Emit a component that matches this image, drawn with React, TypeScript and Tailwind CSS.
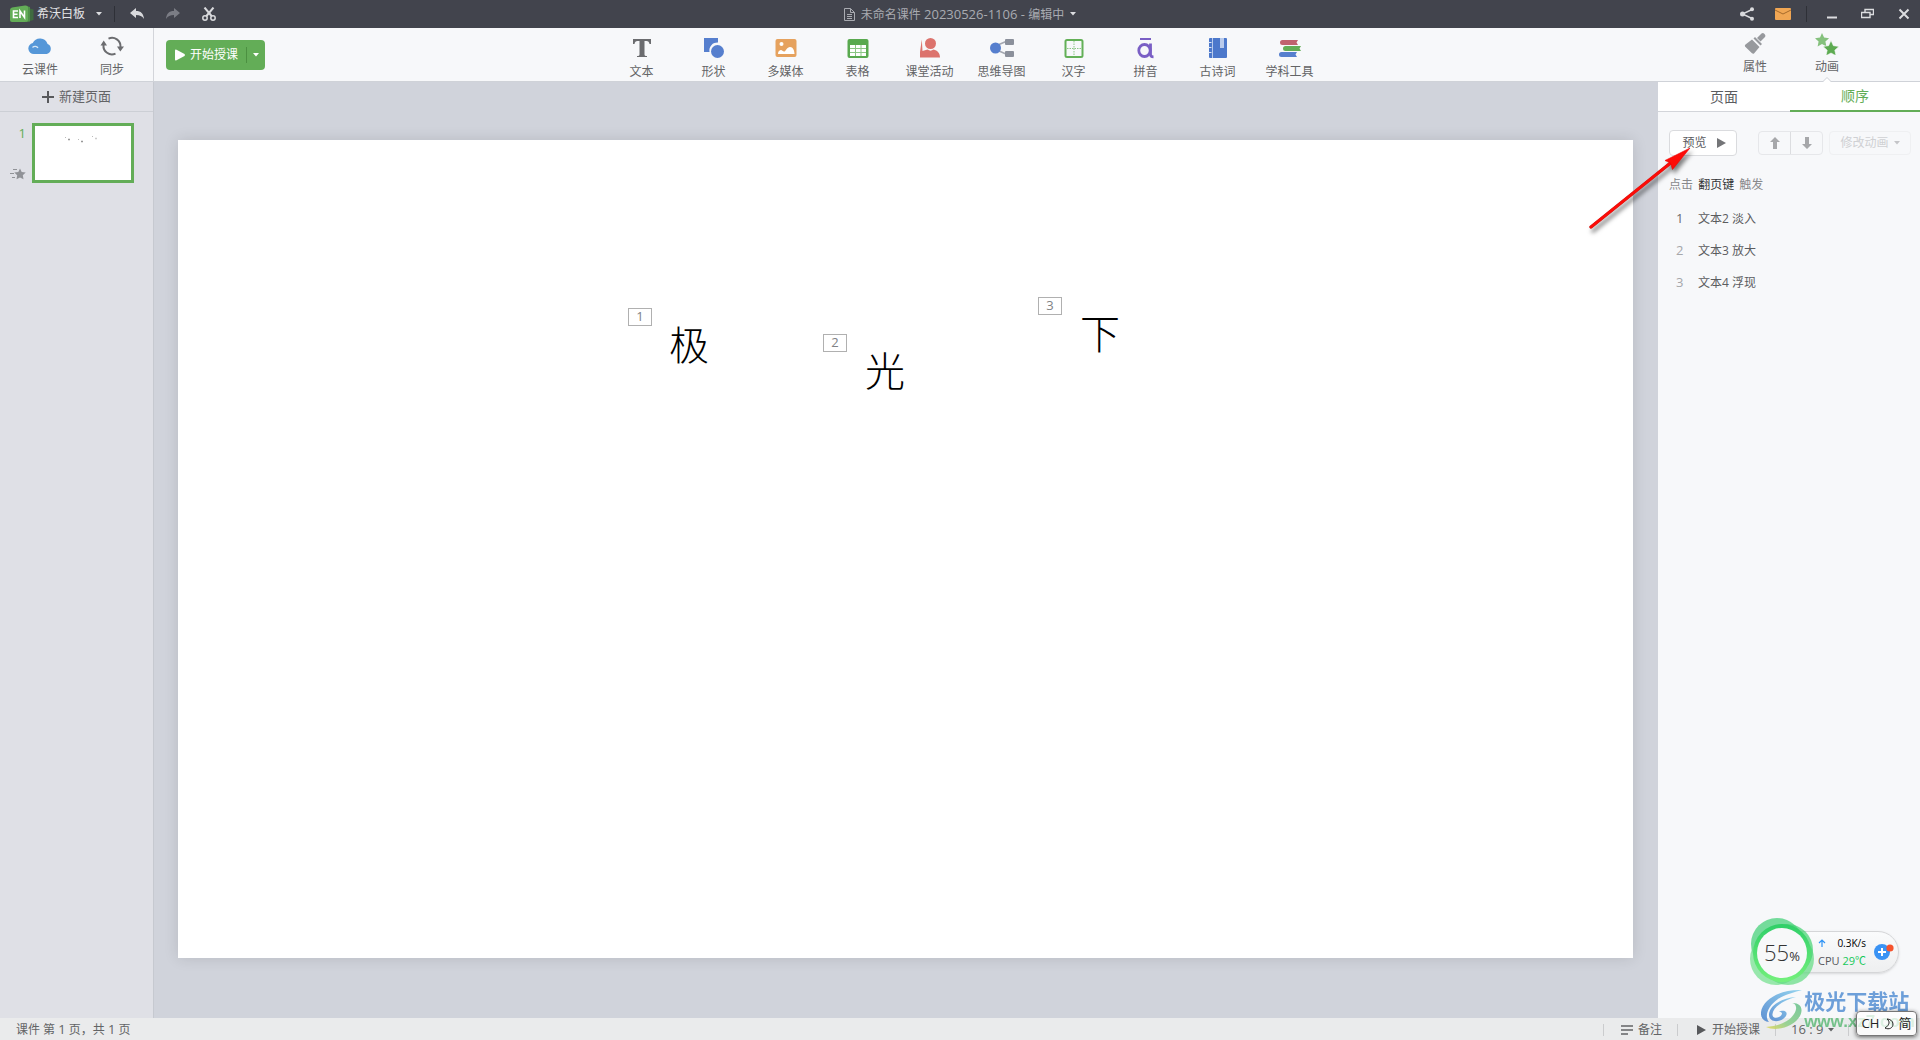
import React from "react";

type IconProps = { children: React.ReactNode; w?: number; h?: number };

function Icon({ children, w = 24, h = 24 }: IconProps) {
  return (
    <svg width={w} height={h} viewBox={`0 0 ${w} ${h}`} fill="none" aria-hidden="true" className="shrink-0">
      {children}
    </svg>
  );
}

function Caret({ color = "#dcdde0" }: { color?: string }) {
  return (
    <Icon w={6} h={4}>
      <path d="M0 0h6L3 3.5z" fill={color} />
    </Icon>
  );
}

function CloudIcon() {
  return (
    <Icon>
      <path d="M6 20a5.500 5.500 0 0 1-1.200-10.900A8 8 0 0 1 19.600 10 5.300 5.300 0 0 1 18.800 20z" fill="#5597d8" />
      <path d="M4.500 13.500c1.500-1.700 4.500-1.600 5.500.6" stroke="#d5e6f6" strokeWidth="1.200" />
    </Icon>
  );
}

function SyncIcon() {
  return (
    <Icon>
      <path d="M8.500 4.600A8.500 8.500 0 0 1 20.500 13" stroke="#6c6d70" strokeWidth="2" />
      <path d="M15.500 19.600A8.500 8.500 0 0 1 3.500 11" stroke="#6c6d70" strokeWidth="2" />
      <path d="M17 12.500h7L20.300 17.500zM0.500 11.500h6.500L3.700 6.500z" fill="#6c6d70" />
    </Icon>
  );
}

const tools: { label: string; icon: React.ReactNode }[] = [
  {
    label: "文本",
    icon: (
      <Icon>
        <path d="M3 3h18v5h-1.500c-.3-2-1.200-3-3-3H14.500v13.500c0 1 .8 1.500 2.500 1.500V21H7v-1c1.700 0 2.500-.5 2.500-1.500V5h-2c-1.800 0-2.700 1-3 3H3z" fill="#6b6c6f" />
      </Icon>
    ),
  },
  {
    label: "形状",
    icon: (
      <Icon>
        <path d="M2 2h14v4.500A8 8 0 0 0 7.500 16H2z" fill="#567fce" />
        <circle cx="15.500" cy="15.500" r="6.500" fill="#567fce" />
      </Icon>
    ),
  },
  {
    label: "多媒体",
    icon: (
      <Icon>
        <rect x="1.500" y="3" width="21" height="18" rx="2" fill="#e6a25e" />
        <circle cx="7.500" cy="8" r="2" fill="#fff" />
        <path d="M4 18c0-3 1.800-4 3-4s2 2 3.500 1.500S13 11 16 11s4.500 3.500 4.500 7z" fill="#fff" />
      </Icon>
    ),
  },
  {
    label: "表格",
    icon: (
      <Icon>
        <rect x="1.500" y="3" width="21" height="19" rx="2" fill="#59a94f" />
        <path d="M4 9h16v11H4z" fill="#fff" />
        <path d="M4 12.500h16M4 16.500h16M9.500 9v11M15 9v11" stroke="#8bc684" />
      </Icon>
    ),
  },
  {
    label: "课堂活动",
    icon: (
      <Icon>
        <circle cx="12.500" cy="7.500" r="5.500" fill="#dc736d" />
        <path d="M3.800 3.500 4.500 15l5-1.500c2 1.500 4 1.500 6 0 4 1 6.500 3.500 6.500 8H2V16z" fill="#dc736d" />
      </Icon>
    ),
  },
  {
    label: "思维导图",
    icon: (
      <Icon>
        <path d="M9 8.500 16 5.500M9 15l7 3" stroke="#a3a7b0" strokeWidth="1.500" />
        <circle cx="5.500" cy="12" r="5.500" fill="#567fce" />
        <rect x="15" y="3" width="9" height="6" rx="1" fill="#8b909b" />
        <rect x="15" y="15" width="9" height="6" rx="1" fill="#8b909b" />
      </Icon>
    ),
  },
  {
    label: "汉字",
    icon: (
      <Icon>
        <rect x="3.500" y="4" width="17" height="17" rx="1.500" stroke="#63b057" strokeWidth="2" />
        <path d="M12 5v15M5 12.500h14" stroke="#8bc684" strokeDasharray="1.500 1" />
      </Icon>
    ),
  },
  {
    label: "拼音",
    icon: (
      <Icon>
        <path d="M6 3h11" stroke="#7a5fc5" strokeWidth="2" />
        <ellipse cx="10.500" cy="14.500" rx="5.700" ry="6" stroke="#7a5fc5" strokeWidth="2.800" />
        <path d="M16.500 7.500V18.500c0 1.500.8 2.300 3 2.300" stroke="#7a5fc5" strokeWidth="2.800" />
      </Icon>
    ),
  },
  {
    label: "古诗词",
    icon: (
      <Icon>
        <rect x="3" y="2" width="18" height="20" rx="1" fill="#4c78cb" />
        <path d="M6.500 2v20" stroke="#b9cbec" />
        <path d="M2.500 6.500h3M2.500 11.500h3M2.500 16.500h3" stroke="#dfe8f7" />
        <path d="M14 2h4v10h-4z" fill="#b9cbec" />
      </Icon>
    ),
  },
  {
    label: "学科工具",
    icon: (
      <Icon>
        <path d="M4.500 4H20l-1.500 2.500L20 9H4.500a2.500 2.500 0 0 1 0-5z" fill="#c0626f" />
        <path d="M7.500 10H23l-1.500 2.500L23 15H7.500a2.500 2.500 0 0 1 0-5z" fill="#63ad57" />
        <path d="M3.500 16H19l-1.500 2.500L19 21H3.500a2.500 2.500 0 0 1 0-5z" fill="#567fce" />
      </Icon>
    ),
  },
];

const steps = ["文本2 淡入", "文本3 放大", "文本4 浮现"];

const canvasItems = [
  { n: 1, char: "极", badge: "left-[450px] top-[168px]", text: "left-[491px] top-[185px]" },
  { n: 2, char: "光", badge: "left-[645px] top-[194px]", text: "left-[687px] top-[211px]" },
  { n: 3, char: "下", badge: "left-[860px] top-[157px]", text: "left-[902px] top-[174px]" },
];

function TitleBar() {
  return (
    <header className="grid h-7 shrink-0 grid-cols-[1fr_auto_1fr] items-center bg-[#42444d] text-[#e2e3e6]">
      <div className="flex items-center pl-2">
        <button className="flex items-center gap-[3px]">
          <Icon w={26} h={20}>
            <path d="M22 4.500 25.500 5.500v10.500l-3.500 1z" fill="#3f6b40" />
            <path d="M18 2l4 1v14.500l-4 .5z" fill="#4f9149" />
            <path d="M4 3.500 17 1.500q3-.3 3 2v12q0 2.500-3 2.500H4q-2 0-2-2V6q0-2 2-2.500z" fill="#63ad57" />
            <path d="M10 7H5.500v6.500H10M5.500 10.200H9.500M12 14V7l4.500 6.500V6.500" stroke="#fff" strokeWidth="1.600" />
          </Icon>
          <span className="text-xs">希沃白板</span>
          <span className="pl-2">
            <Caret />
          </span>
        </button>
        <span className="ml-3 h-4 w-px bg-[#2e3037]" />
        <button aria-label="撤销" className="ml-[15px]">
          <Icon w={14} h={12}>
            <path d="M0 5 6 0v3c5 0 7.500 2.500 8 8-2-3-4-4-8-4v3z" fill="#d9dadd" />
          </Icon>
        </button>
        <button aria-label="重做" className="ml-[22px]">
          <Icon w={14} h={12}>
            <path d="M14 5 8 0v3C3 3 .5 5.500 0 11c2-3 4-4 8-4v3z" fill="#7b7d85" />
          </Icon>
        </button>
        <button aria-label="剪切" className="ml-[22px]">
          <Icon w={14} h={14}>
            <path d="M2.500 0.500 10 9.500M11.500 0.500 4 9.500" stroke="#d9dadd" strokeWidth="2" />
            <circle cx="3" cy="11" r="2.200" stroke="#d9dadd" strokeWidth="1.500" />
            <circle cx="11" cy="11" r="2.200" stroke="#d9dadd" strokeWidth="1.500" />
          </Icon>
        </button>
      </div>
      <button className="flex items-center gap-[6px] text-[#a9abb1]">
        <Icon w={11} h={13}>
          <path d="M.5.5h6l4 4v8H.5zM6.500.5v4h4M3 6.500h5M3 8.500h5M3 10.500h5" stroke="#a9abb1" />
        </Icon>
        <span className="text-[13px] leading-5">
          <span className="text-xs">未命名课件</span> 20230526-1106 - <span className="text-xs">编辑中</span>
        </span>
        <Caret />
      </button>
      <div className="flex items-center justify-end pr-[10px]">
        <button aria-label="分享">
          <Icon w={14} h={14}>
            <path d="M12 2.500 2.500 7 12 11.500" stroke="#d9dadd" strokeWidth="1.400" />
            <circle cx="2.500" cy="7" r="2.500" fill="#d9dadd" />
            <circle cx="12" cy="2.200" r="2" fill="#d9dadd" />
            <circle cx="12" cy="11.800" r="2" fill="#d9dadd" />
          </Icon>
        </button>
        <button aria-label="消息" className="ml-5">
          <Icon w={18} h={12}>
            <rect x="1" width="16" height="12" rx="1" fill="#f0a653" />
            <path d="M1 2l8 4 8-4" stroke="#a56a2b" />
          </Icon>
        </button>
        <span className="ml-[14px] h-4 w-px bg-[#2e3037]" />
        <button aria-label="最小化" className="ml-5">
          <Icon w={10} h={12}>
            <path d="M0 9.500h10" stroke="#dcdde0" strokeWidth="2" />
          </Icon>
        </button>
        <button aria-label="还原" className="ml-6">
          <Icon w={13} h={12}>
            <path d="M4 4V1.500h8.500v5H9M.5 4.500H9v5H.5z" stroke="#dcdde0" strokeWidth="1.400" />
          </Icon>
        </button>
        <button aria-label="关闭" className="ml-6">
          <Icon w={12} h={12}>
            <path d="M1.500 1.500l9 9M10.500 1.500l-9 9" stroke="#dcdde0" strokeWidth="2" />
          </Icon>
        </button>
      </div>
    </header>
  );
}

function Toolbar() {
  return (
    <div className="grid h-[54px] shrink-0 grid-cols-[1fr_auto_1fr] border-b border-[#cfd2d8] bg-[#f7f8fa] text-xs text-[#636466]">
      <div className="flex">
        <div className="flex w-[154px] border-r border-[#d3d5da] pl-1">
          <button className="flex w-[72px] flex-col items-center gap-1 pt-[6px] leading-4">
            <CloudIcon />
            云课件
          </button>
          <button className="flex w-[72px] flex-col items-center gap-1 pt-[6px] leading-4">
            <SyncIcon />
            同步
          </button>
        </div>
        <div className="ml-3 mt-3 flex h-[30px] items-center rounded-sm bg-[#63ad57] text-white">
          <button className="flex items-center gap-1 pl-2 pr-2">
            <Icon w={12} h={12}>
              <path d="M1 1.500Q1 0 2.500.7L10.500 5q1 1 0 2L2.500 11.300Q1 12 1 10.500z" fill="#fff" />
            </Icon>
            开始授课
          </button>
          <span className="h-4 w-px bg-[#4c9041]" />
          <button aria-label="更多授课方式" className="flex h-full items-center px-[6px]">
            <Caret color="#fff" />
          </button>
        </div>
      </div>
      <nav className="flex pl-[11px]">
        {tools.map((t) => (
          <button key={t.label} className="flex w-[72px] flex-col items-center gap-1 pt-2 leading-4">
            {t.icon}
            {t.label}
          </button>
        ))}
      </nav>
      <div className="flex justify-end pr-[57px]">
        <button className="flex w-[72px] flex-col items-center gap-1 pt-[5px] leading-4">
          <Icon w={24} h={22}>
            <path d="M14 5 18.500.5q1.500-1 3 .5t.5 3L17.500 8.500z" fill="#97999d" />
            <path d="M10.500 5.500 17.500 12.500 19 11 12 4z" fill="#97999d" />
            <path d="M9 6.500 16.500 14 11 20.500q-1 .5-2-.2L2 13.500q-.5-1.500.5-2z" fill="#97999d" />
          </Icon>
          属性
        </button>
        <button className="relative flex w-[72px] flex-col items-center gap-1 pt-[5px] leading-4">
          <Icon w={24} h={22}>
            <path d="M7 0l2.100 4.600 5 .6-3.700 3.400 1 4.900L7 11.100l-4.400 2.400 1-4.900L0 5.200l5-.6z" fill="#85c17d" />
            <path d="M16 7.500l2.400 5.200 5.600.7-4.200 3.800 1.200 5.500-5-2.700-5 2.700 1.200-5.500L8 13.400l5.600-.7z" fill="#5dab51" stroke="#f7f8fa" strokeWidth=".6" />
          </Icon>
          动画
          <span className="absolute -bottom-px left-8">
            <Icon w={8} h={5}>
              <path d="M0 5 4 1l4 4z" fill="#fff" />
              <path d="M0 4.500 4 .5l4 4" stroke="#cfd2d8" />
            </Icon>
          </span>
        </button>
      </div>
    </div>
  );
}

function PageList() {
  return (
    <aside className="flex w-[154px] shrink-0 flex-col border-r border-[#c6c9d0] bg-[#dfe0e6]">
      <button className="flex h-[30px] items-center justify-center gap-1 border-b border-[#cccfd5] text-[13px] text-[#636466]">
        <Icon w={13} h={12}>
          <path d="M0 6h12M6 0v12" stroke="#58595c" strokeWidth="2" />
        </Icon>
        新建页面
      </button>
      <div className="flex gap-[6px] pl-[10px] pt-[11px]">
        <div className="flex w-4 flex-col items-end justify-between pb-[3px]">
          <span className="w-full text-right text-[13px] leading-5 text-[#63ad57]">1</span>
          <Icon w={16} h={12}>
            <path d="M10 .5l1.700 3.600 4 .5-2.900 2.700.7 4L10 9.400l-3.500 1.900.7-4-2.900-2.700 4-.5z" fill="#909297" />
            <path d="M3 1.500h4M0 5.500h4M2 9.500h3" stroke="#909297" />
          </Icon>
        </div>
        <button aria-label="第 1 页" className="h-[60px] w-[102px] border-3 border-[#63ad57] bg-white">
          <svg viewBox="0 0 96 54" className="block h-full w-full" aria-hidden="true">
            <path d="M30 11.500h1M43 13.500h1M57 10.500h1" stroke="#bbb" />
            <path d="M33 13.500h2M46 15.500h2M60.500 12.500h1" stroke="#999" strokeWidth="1.500" />
          </svg>
        </button>
      </div>
    </aside>
  );
}

function Canvas() {
  return (
    <main className="flex min-w-0 flex-1 items-center justify-center bg-[#d0d3db] pb-[2px] pl-6 pr-[25px]">
      <div className="relative aspect-video w-full bg-white shadow-[0_0_14px_rgba(0,0,0,0.12)]">
        {canvasItems.map((it) => (
          <React.Fragment key={it.n}>
            <span className={`absolute flex h-[18px] w-6 items-center justify-center border border-[#b0b0b0] text-[13px] text-[#808285] ${it.badge}`}>
              {it.n}
            </span>
            <span className={`absolute text-[40px] font-light leading-10 text-black ${it.text}`}>{it.char}</span>
          </React.Fragment>
        ))}
      </div>
    </main>
  );
}

function AnimationPanel() {
  return (
    <aside className="w-[262px] shrink-0 bg-[#f7f8fa] text-xs text-[#5b5c5f]">
      <div className="flex h-[30px] bg-white text-sm">
        <button className="w-[132px] border-b border-[#d3d5da]">页面</button>
        <button className="flex-1 border-b-2 border-[#63ad57] text-[#63ad57]">顺序</button>
      </div>
      <div className="flex items-center pl-[11px] pt-[18px]">
        <button className="flex h-[26px] w-[68px] items-center justify-center gap-[10px] rounded-sm border border-[#dadbde] bg-white pl-[2px]">
          预览
          <Icon w={9} h={10}>
            <path d="M0 0l9 5-9 5z" fill="#747578" />
          </Icon>
        </button>
        <div className="ml-[21px] flex h-6 w-[65px] rounded-sm border border-[#e6e7ea]">
          <button aria-label="上移" className="flex flex-1 items-center justify-center border-r border-[#dcdde0]">
            <Icon w={10} h={12}>
              <path d="M5 0l5 5H7v7H3V5H0z" fill="#a6a7aa" />
            </Icon>
          </button>
          <button aria-label="下移" className="flex flex-1 items-center justify-center">
            <Icon w={10} h={12}>
              <path d="M5 12l5-5H7V0H3v7H0z" fill="#a6a7aa" />
            </Icon>
          </button>
        </div>
        <button disabled className="ml-[6px] flex h-6 w-[82px] items-center justify-center gap-[5px] rounded-sm border border-[#eff0f2] text-[#cfd0d3]">
          修改动画
          <Caret color="#c4c5c8" />
        </button>
      </div>
      <p className="pl-[11px] pt-[19px] leading-5 text-[#88898c]">
        点击 <span className="px-[2px] text-[#333436]">翻页键</span> 触发
      </p>
      <ol className="pl-[18px] pt-2">
        {steps.map((s, i) => (
          <li key={s} className="flex h-8 items-center">
            <span className={i === 0 ? "w-[22px] text-[13px] text-[#6b6c6f]" : "w-[22px] text-[13px] text-[#a6a7aa]"}>{i + 1}</span>
            <span>{s}</span>
          </li>
        ))}
      </ol>
    </aside>
  );
}

function StatusBar() {
  return (
    <footer className="flex h-[22px] shrink-0 items-center justify-between bg-[#eaebec] pl-4 pt-[2px] text-xs text-[#636466]">
      <span>
        课件 第 <span className="text-[13px]">1</span> 页，共 <span className="text-[13px]">1</span> 页
      </span>
      <div className="flex items-center">
        <button className="flex h-3 w-[74px] items-center gap-[5px] border-l border-[#cbccce] pl-[17px]">
          <Icon w={12} h={10}>
            <path d="M0 1h12M0 5h12M0 9h7" stroke="#636466" strokeWidth="1.600" />
          </Icon>
          备注
        </button>
        <button className="flex h-3 w-[98px] items-center gap-[6px] border-l border-[#cbccce] pl-[19px]">
          <Icon w={9} h={10}>
            <path d="M0 0l9 5-9 5z" fill="#58595c" />
          </Icon>
          开始授课
        </button>
        <button className="flex h-3 w-[73px] items-center gap-[5px] border-l border-[#cbccce] pl-[15px] text-[13px]">
          16 : 9
          <Caret color="#636466" />
        </button>
        <span className="h-3 w-[72px] border-l border-[#cbccce]" />
      </div>
    </footer>
  );
}

function PointerArrow() {
  return (
    <div className="pointer-events-none absolute right-[220px] top-[140px]">
      <svg width="120" height="100" viewBox="0 0 120 100" aria-hidden="true" className="drop-shadow-[2px_4px_2px_rgba(0,0,0,0.5)]">
        <path d="M11 87 93 21" stroke="#c8201c" strokeWidth="3.400" strokeLinecap="round" />
        <path d="M11 87 93 21" stroke="#fd0b07" strokeWidth="2.600" strokeLinecap="round" />
        <path d="M110 8 85 20.500 90.500 23 92.500 29.500z" fill="#fd0b07" stroke="#e00" strokeWidth=".6" />
      </svg>
    </div>
  );
}

function SystemMonitor() {
  return (
    <div className="absolute bottom-[55px] right-[21px] flex items-center text-[10px]">
      <div className="relative z-10 -mr-7 flex size-[66px] items-center justify-center">
        <svg width="66" height="70" viewBox="0 0 66 70" className="absolute -top-[2px] left-0" aria-hidden="true">
          <defs>
            <linearGradient id="ring" x1="0" y1="0" x2="0" y2="1">
              <stop offset="0" stopColor="#2fcf68" />
              <stop offset="1" stopColor="#74f07c" />
            </linearGradient>
          </defs>
          <circle cx="28" cy="27" r="26" fill="#3ccf72" opacity=".7" />
          <circle cx="27" cy="42" r="26" fill="#6fe08a" opacity=".7" />
          <circle cx="39" cy="42" r="26" fill="#5fdc80" opacity=".7" />
          <circle cx="38" cy="33" r="26" fill="#45d170" opacity=".7" />
          <circle cx="33" cy="36" r="29" fill="url(#ring)" />
          <circle cx="33" cy="36" r="25" fill="#f7f8f9" />
        </svg>
        <span className="relative flex items-baseline text-[22px] font-light text-[#333]">
          55<span className="text-[13px] font-normal">%</span>
        </span>
      </div>
      <div className="flex h-[42px] w-[112px] items-center justify-between rounded-r-full border border-[#d5d6d8] bg-gradient-to-b from-[#fafbfc] to-[#eeeff0] pl-[30px] pr-[3px] shadow-sm">
        <div className="w-12 leading-[18px]">
          <div className="flex items-center justify-between text-black">
            <Icon w={8} h={8}>
              <path d="M4 8V1M1 4l3-3 3 3" stroke="#2f93f5" strokeWidth="1.200" />
            </Icon>
            <span className="whitespace-nowrap">0.3K/s</span>
          </div>
          <div className="whitespace-nowrap text-[11px] text-[#55565a]">
            CPU <span className="text-[#16c95a]">29℃</span>
          </div>
        </div>
        <button aria-label="加速">
          <Icon w={22} h={18}>
            <circle cx="9" cy="9" r="8" fill="#3a93f4" />
            <path d="M5 9h8M9 5v8" stroke="#fff" strokeWidth="2" />
            <circle cx="17" cy="5" r="3.600" fill="#f5532d" />
          </Icon>
        </button>
      </div>
    </div>
  );
}

function Watermark() {
  return (
    <div className="pointer-events-none absolute bottom-[9px] right-[5px] flex items-center gap-px opacity-90">
      <Icon w={42} h={42}>
        <defs>
          <linearGradient id="swirl" x1="0" y1="1" x2="1" y2="0">
            <stop offset="0" stopColor="#4f86cf" />
            <stop offset="1" stopColor="#8ad0ee" />
          </linearGradient>
          <linearGradient id="leaf" x1="1" y1="0" x2="0" y2="1">
            <stop offset="0" stopColor="#6cc391" />
            <stop offset=".6" stopColor="#8fcf8c" />
            <stop offset="1" stopColor="#e6d85c" />
          </linearGradient>
        </defs>
        <path d="M41 1C20 0 2 10 0 23c-.6 6 3 9.500 8 10C3 27 7 17 17 10 25 5 34 3 41 1z" fill="url(#swirl)" />
        <path d="M35 8C21 9 9 16 8 25c-.5 6 5 8.500 11 6.500 5-1.700 8-6 6-8.500-1.500-2-5-1.500-7 0 4-.5 4 3 0 5-3.500 1.700-7 .5-6.500-3C12 18 23 11 35 8z" fill="url(#swirl)" />
        <path d="M30 14c5 0 7 5 3 11-5 8-15 12-28 13 10 5 28 0 34-11 4-8 0-14-9-13z" fill="url(#leaf)" />
      </Icon>
      <div>
        <div className="text-[21px] font-bold leading-6 text-[#5f96d6]">极光下载站</div>
        <div className="font-['Liberation_Sans'] text-[17px] font-bold leading-[18px] text-[#68bd80]">www.xz7.com</div>
      </div>
    </div>
  );
}

function InputMethodBar() {
  return (
    <div className="absolute bottom-1 right-[3px] flex h-[25px] w-[61px] items-center justify-center gap-1 rounded-[4px] border border-[#777] bg-white/75 text-[13px] text-[#222] shadow-[0_1px_4px_rgba(0,0,0,0.6)]">
      CH
      <Icon w={11} h={12}>
        <path d="M4 1c3 2 3 6-2 9 4 2 8 0 8-4 0-3-3-5-6-5z" stroke="#222" />
      </Icon>
      简
    </div>
  );
}

export default function App() {
  return (
    <div className="relative flex h-screen flex-col overflow-hidden font-['Open_Sans','Noto_Sans_CJK_SC',sans-serif]">
      <TitleBar />
      <Toolbar />
      <div className="flex min-h-0 flex-1">
        <PageList />
        <Canvas />
        <AnimationPanel />
      </div>
      <StatusBar />
      <PointerArrow />
      <SystemMonitor />
      <Watermark />
      <InputMethodBar />
    </div>
  );
}
